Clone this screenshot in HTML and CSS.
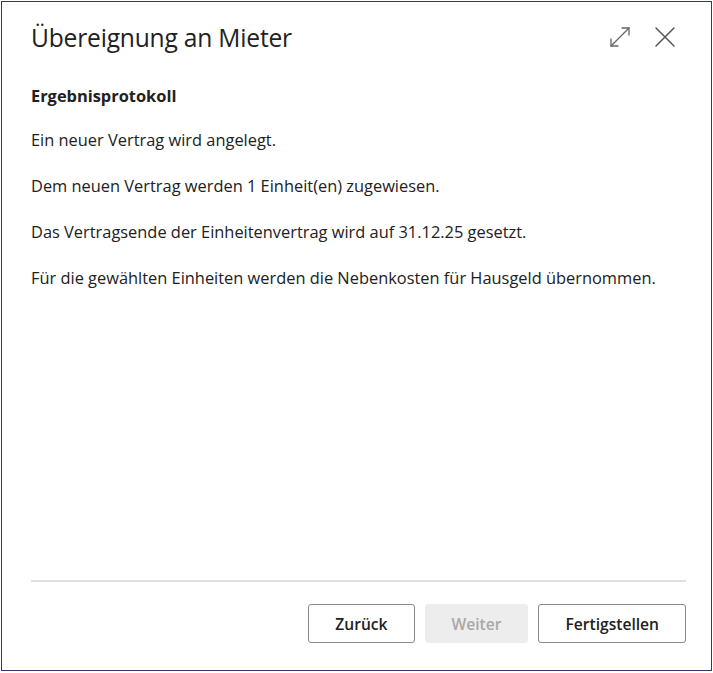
FILE: index.html
```html
<!DOCTYPE html>
<html lang="de">
<head>
<meta charset="utf-8">
<link rel="stylesheet" href="styles.css">
</head>
<body>
<div class="dialog">
  <header class="head">
    <h1 class="title">Übereignung an Mieter</h1>
    <div class="tools">
      <svg class="icon" width="22" height="22" viewBox="0 0 22 22" fill="none" stroke="#666" stroke-width="1.3" stroke-linecap="round">
        <path d="M2 20 L20 2"/>
        <path d="M13 2 H20 V9"/>
        <path d="M2 13 V20 H9"/>
      </svg>
      <svg class="icon" width="22" height="22" viewBox="0 0 22 22" fill="none" stroke="#555" stroke-width="1.5" stroke-linecap="round">
        <path d="M2 2 L20 20"/>
        <path d="M20 2 L2 20"/>
      </svg>
    </div>
  </header>
  <main class="body">
    <h2 class="section">Ergebnisprotokoll</h2>
    <p class="line">Ein neuer Vertrag wird angelegt.</p>
    <p class="line">Dem neuen Vertrag werden 1 Einheit(en) zugewiesen.</p>
    <p class="line">Das Vertragsende der Einheitenvertrag wird auf 31.12.25 gesetzt.</p>
    <p class="line">Für die gewählten Einheiten werden die Nebenkosten für Hausgeld übernommen.</p>
  </main>
  <footer class="foot">
    <button class="btn">Zurück</button>
    <button class="btn btn-disabled" disabled>Weiter</button>
    <button class="btn">Fertigstellen</button>
  </footer>
</div>
</body>
</html>
```
FILE: styles.css
```css
html, body {
  margin: 0;
  padding: 0;
  background: #ffffff;
}
body {
  padding: 1px 0 0 1px;
  font-family: "Open Sans", "Noto Sans", sans-serif;
  color: #212121;
}
.dialog {
  box-sizing: border-box;
  width: 711px;
  height: 670px;
  border: 1px solid #2e3a66;
  display: flex;
  flex-direction: column;
  padding: 0 25px 0 29px;
}
.head {
  display: flex;
  align-items: center;
  justify-content: space-between;
  height: 72px;
}
.title {
  margin: 0;
  font-size: 24.6px;
  font-weight: 400;
  letter-spacing: -0.2px;
  line-height: 1.2;
}
.tools {
  display: flex;
  gap: 23px;
  align-items: center;
  padding-right: 10px;
  margin-top: -2px;
}
.icon {
  display: block;
}
.body {
  flex: 1;
}
.section {
  margin: 11px 0 22px;
  font-size: 16.4px;
  font-weight: 700;
  line-height: 22px;
}
.line {
  margin: 0 0 24px;
  font-size: 16.4px;
  line-height: 22px;
}
.foot {
  border-top: 2px solid #e0e0e0;
  display: flex;
  justify-content: flex-end;
  gap: 10px;
  padding-top: 22px;
  height: 90px;
  box-sizing: border-box;
}
.btn {
  height: 39px;
  box-sizing: border-box;
  border: 1px solid #8a8a8a;
  border-radius: 3px;
  background: #fff;
  font-family: inherit;
  font-size: 15.6px;
  font-weight: 600;
  color: #212121;
  padding: 0 26px;
}
.btn-disabled {
  border-color: #ededed;
  background: #ededed;
  color: #a8a8a8;
}
```
